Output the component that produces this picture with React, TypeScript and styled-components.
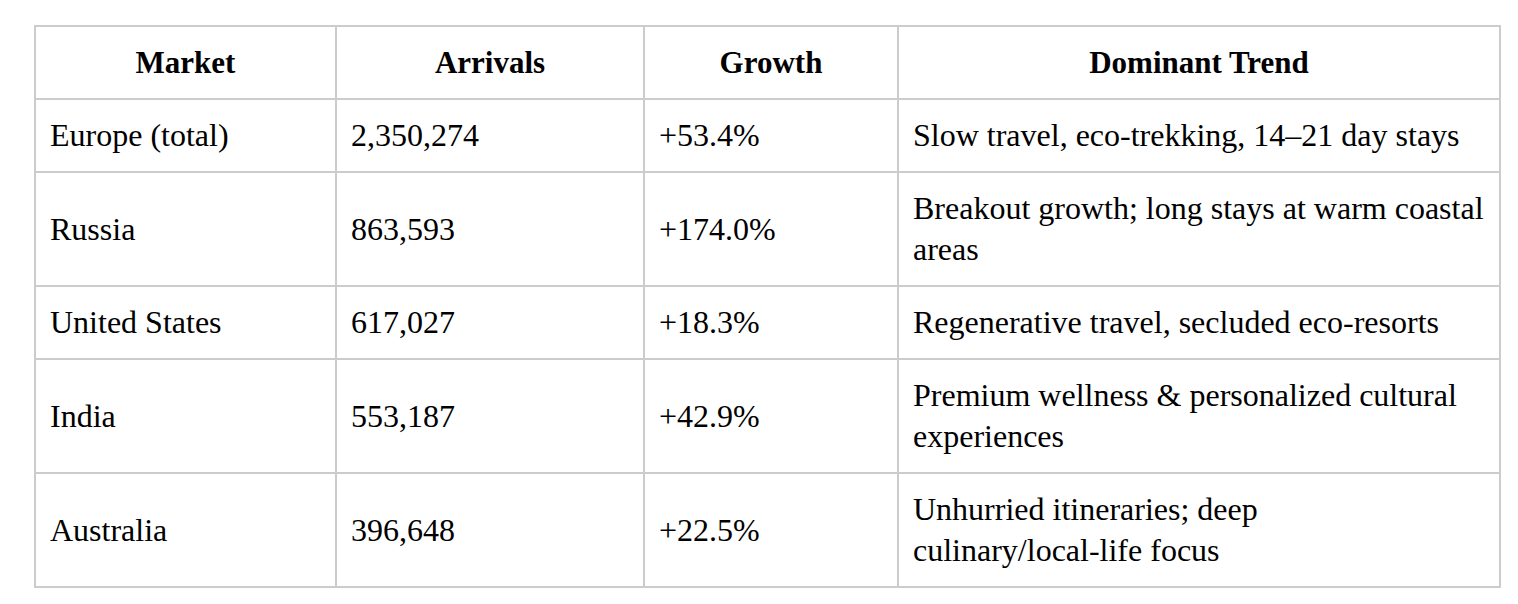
import React from 'react';
import styled, { createGlobalStyle } from 'styled-components';

const GlobalStyle = createGlobalStyle`
	body {
		margin: 0;
		background: #fff;
		font-family: 'Liberation Serif', 'Times New Roman', serif;
		color: #000;
	}
`;

type Market = {
	name: string;
	arrivals: string;
	growth: string;
	trend: React.ReactNode;
};

const NoBreak = styled.span`
	white-space: nowrap;
`;

const markets: Market[] = [
	{ name: 'Europe (total)', arrivals: '2,350,274', growth: '+53.4%', trend: 'Slow travel, eco-trekking, 14–21 day stays' },
	{ name: 'Russia', arrivals: '863,593', growth: '+174.0%', trend: 'Breakout growth; long stays at warm coastal areas' },
	{ name: 'United States', arrivals: '617,027', growth: '+18.3%', trend: 'Regenerative travel, secluded eco-resorts' },
	{ name: 'India', arrivals: '553,187', growth: '+42.9%', trend: 'Premium wellness & personalized cultural experiences' },
	{
		name: 'Australia',
		arrivals: '396,648',
		growth: '+22.5%',
		trend: (
			<>
				Unhurried itineraries; deep <NoBreak>culinary/local-life</NoBreak> focus
			</>
		),
	},
];

const columns = [
	{ label: 'Market', width: 301 },
	{ label: 'Arrivals', width: 308 },
	{ label: 'Growth', width: 254 },
	{ label: 'Dominant Trend', width: 602 },
];

export default function App() {
	return (
		<>
			<GlobalStyle />
			<Page>
				<Table>
					<colgroup>
						{columns.map((col) => (
							<col key={col.label} style={{ width: col.width }} />
						))}
					</colgroup>
					<thead>
						<tr>
							{columns.map((col) => (
								<HeadCell key={col.label}>{col.label}</HeadCell>
							))}
						</tr>
					</thead>
					<tbody>
						{markets.map((m) => (
							<tr key={m.name}>
								<Cell>{m.name}</Cell>
								<Cell>{m.arrivals}</Cell>
								<Cell>{m.growth}</Cell>
								<Cell>{m.trend}</Cell>
							</tr>
						))}
					</tbody>
				</Table>
			</Page>
		</>
	);
}

const Page = styled.div`
	padding: 25px 17px 0 34px;
`;

const Table = styled.table`
	width: 1467px;
	border-collapse: collapse;
	table-layout: fixed;
	font-size: 32px;
	line-height: 41px;
`;

const HeadCell = styled.th`
	border: 2px solid #cccccc;
	padding: 15px 14px;
	font-size: 31px;
	font-weight: bold;
	text-align: center;
`;

const Cell = styled.td`
	border: 2px solid #cccccc;
	padding: 15px 14px;
	text-align: left;
	vertical-align: middle;
`;
